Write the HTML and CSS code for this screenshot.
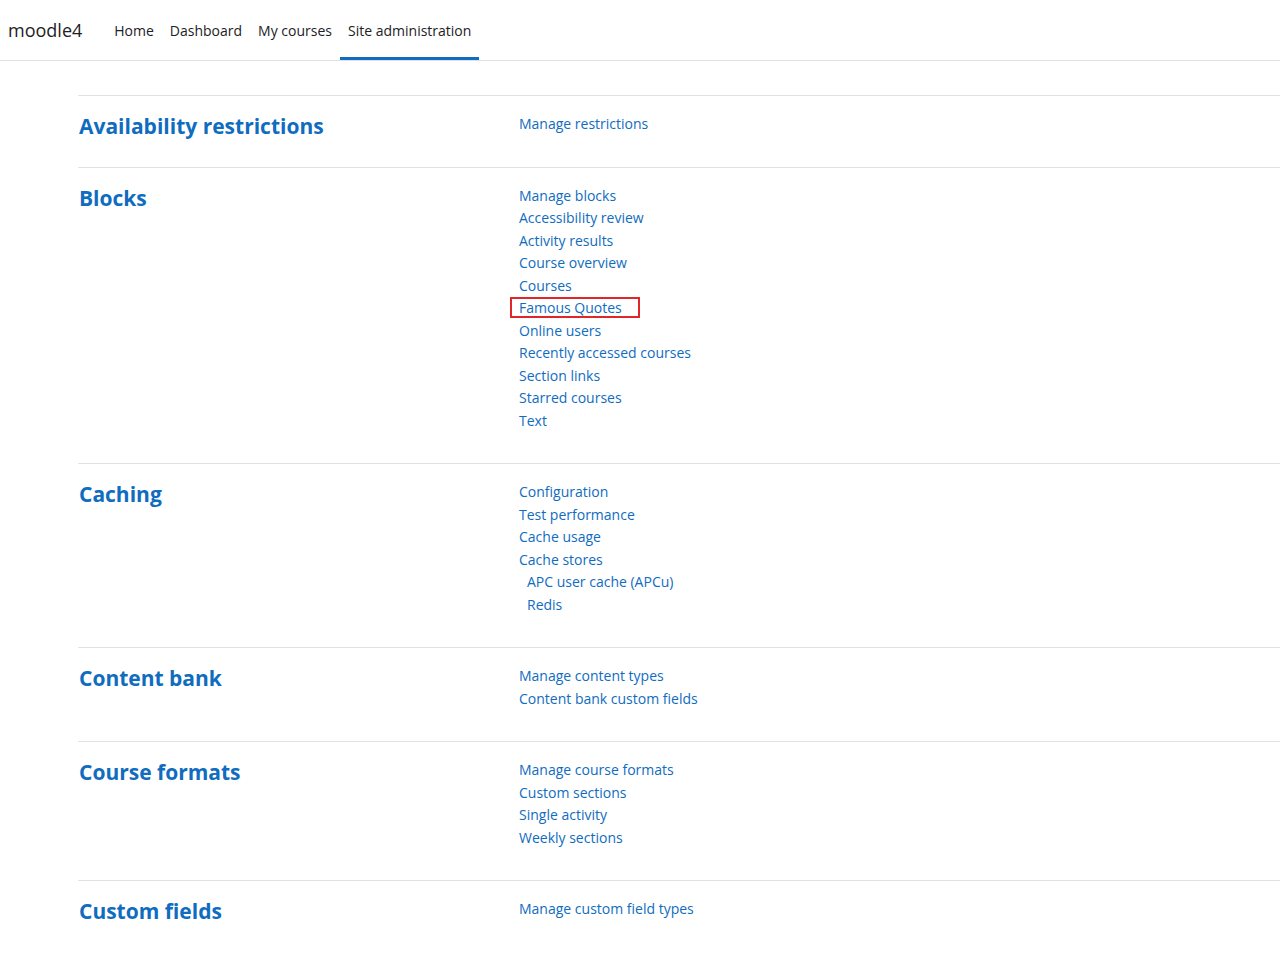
FILE: index.html
```html
<!doctype html>
<html lang="en">
  <head>
    <meta charset="UTF-8" />
    <meta name="viewport" content="width=device-width, initial-scale=1.0" />
    <title>Administration: Plugins</title>
    <link rel="stylesheet" href="styles.css">
  </head>
  <body>
    <nav class="navbar">
      <a class="brand" href="#">moodle4</a>
      <ul class="nav-links">
        <li><a href="#">Home</a></li>
        <li><a href="#">Dashboard</a></li>
        <li><a href="#">My courses</a></li>
        <li class="active"><a href="#">Site administration</a></li>
      </ul>
    </nav>

    <main class="admin-list">
      <section class="admin-row">
        <h3><a href="#">Availability restrictions</a></h3>
        <ul class="links">
          <li><a href="#">Manage restrictions</a></li>
        </ul>
      </section>

      <section class="admin-row">
        <h3><a href="#">Blocks</a></h3>
        <ul class="links">
          <li><a href="#">Manage blocks</a></li>
          <li><a href="#">Accessibility review</a></li>
          <li><a href="#">Activity results</a></li>
          <li><a href="#">Course overview</a></li>
          <li><a href="#">Courses</a></li>
          <li><a class="highlight" href="#">Famous Quotes</a></li>
          <li><a href="#">Online users</a></li>
          <li><a href="#">Recently accessed courses</a></li>
          <li><a href="#">Section links</a></li>
          <li><a href="#">Starred courses</a></li>
          <li><a href="#">Text</a></li>
        </ul>
      </section>

      <section class="admin-row">
        <h3><a href="#">Caching</a></h3>
        <ul class="links">
          <li><a href="#">Configuration</a></li>
          <li><a href="#">Test performance</a></li>
          <li><a href="#">Cache usage</a></li>
          <li><a href="#">Cache stores</a></li>
          <li class="sub"><a href="#">APC user cache (APCu)</a></li>
          <li class="sub"><a href="#">Redis</a></li>
        </ul>
      </section>

      <section class="admin-row">
        <h3><a href="#">Content bank</a></h3>
        <ul class="links">
          <li><a href="#">Manage content types</a></li>
          <li><a href="#">Content bank custom fields</a></li>
        </ul>
      </section>

      <section class="admin-row">
        <h3><a href="#">Course formats</a></h3>
        <ul class="links">
          <li><a href="#">Manage course formats</a></li>
          <li><a href="#">Custom sections</a></li>
          <li><a href="#">Single activity</a></li>
          <li><a href="#">Weekly sections</a></li>
        </ul>
      </section>

      <section class="admin-row">
        <h3><a href="#">Custom fields</a></h3>
        <ul class="links">
          <li><a href="#">Manage custom field types</a></li>
        </ul>
      </section>
    </main>
  </body>
</html>
```

FILE: styles.css
```css
/* Global */
body {
  margin: 0;
  font-family: "Open Sans", "Noto Sans", sans-serif;
  font-size: 14px;
  color: #1d2125;
  background-color: #fff;
  overflow: hidden;
}

a {
  color: #0f6cbf;
  text-decoration: none;
}

ul {
  list-style: none;
  margin: 0;
  padding: 0;
}

/* Top navigation */
.navbar {
  display: flex;
  align-items: stretch;
  height: 60px;
  border-bottom: 1px solid #dee2e6;
}

.brand {
  display: flex;
  align-items: center;
  padding: 0 24px 0 8px;
  font-size: 18px;
  color: #1d2125;
}

.nav-links {
  display: flex;
}

.nav-links li {
  display: flex;
  align-items: center;
  padding: 0 8px;
  border-bottom: 3px solid transparent;
  padding-top: 3px;
}

.nav-links a {
  color: #1d2125;
  font-size: 14px;
}

.nav-links li.active {
  border-bottom-color: #0f6cbf;
}

/* Admin category rows */
.admin-list {
  margin: 34px 0 0 78px;
}

.admin-row {
  display: grid;
  grid-template-columns: 441px 1fr;
  align-items: start;
  border-top: 1px solid #dee2e6;
  padding: 17px 0 31px;
}

.admin-row h3 {
  margin: 2px 0 -2px;
  font-size: 21px;
  font-weight: 700;
  line-height: 22.5px;
  padding-left: 1px;
}

.links li {
  line-height: 22.5px;
}

.links li.sub {
  padding-left: 8px;
}

.highlight {
  position: relative;
}

.highlight::after {
  content: "";
  position: absolute;
  left: -9px;
  right: -18px;
  top: -1px;
  bottom: -1px;
  border: 2px solid #e0262b;
}
```
